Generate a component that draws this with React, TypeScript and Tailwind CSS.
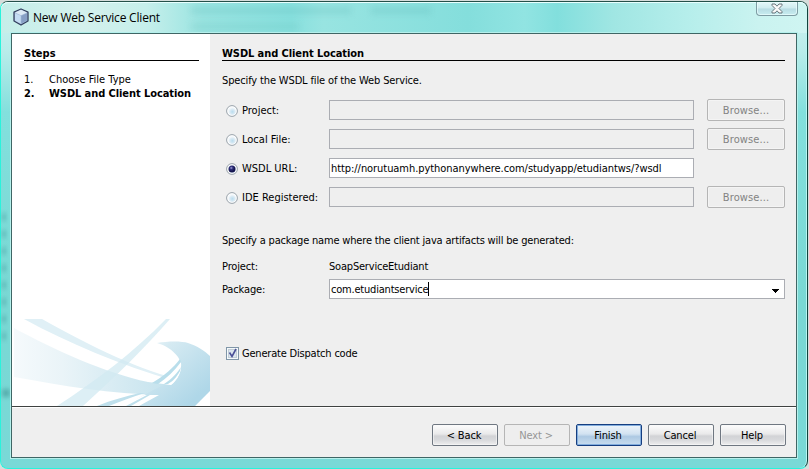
import React from "react";

function Radio({ on = false }: { on?: boolean }) {
  return (
    <svg width="12" height="12" viewBox="0 0 12 12" className="shrink-0">
      <defs>
        <radialGradient id="idle" cx="0.55" cy="0.6">
          <stop offset="0" stopColor="#b9dcee" />
          <stop offset="0.65" stopColor="#dcebf4" />
          <stop offset="1" stopColor="#f4f8fb" />
        </radialGradient>
        <radialGradient id="active" cx="0.4" cy="0.35">
          <stop offset="0" stopColor="#a9a9e0" />
          <stop offset="0.45" stopColor="#30307c" />
          <stop offset="1" stopColor="#15154e" />
        </radialGradient>
      </defs>
      <circle cx="6" cy="6" r="5.4" fill="#fff" stroke="#98a2aa" strokeWidth="1" />
      <circle cx="6" cy="6" r="4" fill="url(#idle)" />
      {on && <circle cx="6" cy="6" r="3.5" fill="url(#active)" />}
    </svg>
  );
}

function Row({ label, on, value, browse = true }: { label: string; on?: boolean; value?: string; browse?: boolean }) {
  return (
    <div className="flex h-[29px] items-start">
      <div className="flex h-[22px] w-[107px] items-center pl-[4px]">
        <div className="pt-[2px]"><Radio on={on} /></div>
        <span className="ml-[4px] pt-px tracking-normal">{label}</span>
      </div>
      <div className={`mt-px flex h-5 w-[365px] items-center border border-[#abadb3] pl-px ${value ? "bg-white" : "bg-[#efefef]"}`}>
        <span className="pt-px tracking-[-0.06px]">{value}</span>
      </div>
      {browse && (
        <button className="ml-[13px] h-[22px] w-[78px] rounded-[2px] border border-[#b5b5b5] bg-[#eeeeee] pt-px tracking-[0.1px] text-[#838383] shadow-[inset_0_0_0_1px_#f4f4f4]">
          Browse...
        </button>
      )}
    </div>
  );
}

const base = "h-[22px] w-[66px] rounded-[2px] border pt-px pr-[2px]";
const normal = `${base} border-[#6f7781] bg-[linear-gradient(#fdfdfd_0%,#e9e9ea_45%,#d2d3d6_55%,#d8d9dc_75%,#efefef_100%)] shadow-[inset_0_0_0_1px_#f8f8f899]`;

export default function App() {
  return (
    <div className="h-[469px] w-[809px] overflow-hidden bg-[#d6dedc] font-['DejaVu_Sans_Condensed','DejaVu_Sans',sans-serif] text-[11px] leading-[14px] tracking-[-0.14px] text-black [font-stretch:condensed]">
      <div className="relative flex h-[468px] w-[808px] translate-y-px flex-col rounded-[8px] border-t border-r border-b border-l border-t-[#245049] border-r-[#12443e] border-b-[#29f3dc] border-l-[#29f3dc] bg-[linear-gradient(#d0f2ef_0px,#b8ecea_50px,#82e0dd_110px,#79d8d4_300px,#79d9d7_468px)] shadow-[inset_0_1px_0_#e8ffff,inset_-1px_0_0_#b8f5f2]">
        <div className="absolute top-[208px] left-0 h-[134px] w-[6px] bg-[repeating-linear-gradient(#4aa3a300_0px,#3f979850_7px,#4aa3a300_14px,#4aa3a300_17px)] blur-[1px]" />
        <div className="absolute top-[387px] left-[1px] h-[8px] w-[8px] bg-[#3d8f8f90] blur-[2px]" />
        <div className="relative flex h-[31px] items-start overflow-hidden rounded-t-[7px] bg-[linear-gradient(90deg,#c5eee9_0%,#d4f1ed_10%,#c6efeb_18%,#9ae4e1_25%,#88e0de_36%,#98e4e1_40%,#84dedc_58%,#91e4e2_65%,#82dfdd_69%,#a0e6e3_76%,#b5eeeb_85%,#caf3f0_94%,#cff5f2_100%)] shadow-[inset_0_1px_0_#e8ffff]">
          <div className="absolute top-[5px] left-[190px] h-[7px] w-[160px] bg-[#58b3b138] blur-[3px]" />
          <div className="absolute top-[5px] left-[370px] h-[7px] w-[60px] bg-[#58b3b138] blur-[3px]" />
          <div className="absolute top-[21px] left-[190px] h-[7px] w-[108px] bg-[#58b3b130] blur-[3px]" />
          <svg width="16" height="18" viewBox="0 0 16 18" className="mt-[6px] ml-[12px]">
            <path d="M8 1 15 4.2V13L8 17 1 13V4.2Z" fill="#a5bdd9" stroke="#354160" strokeWidth="1.3" strokeLinejoin="round" />
            <path d="M8 1.8 14 4.5 8 7.2 2 4.5Z" fill="#dce9f5" />
            <path d="M2 5.2 7.7 7.8V15.6L2 12.5Z" fill="#c4dcf3" />
            <path d="M8.3 7.8 14 5.2V12.5L8.3 15.6Z" fill="#879fc5" />
          </svg>
          <span className="mt-[8px] ml-[4px] font-['Open_Sans',sans-serif] text-[12px] leading-[16px] tracking-[-0.2px] [font-stretch:normal]">New Web Service Client</span>
          <div className="mr-[9px] ml-auto flex h-[14px] w-[42px] items-center justify-center rounded-b-[4px] border border-t-0 border-[#7e9ca3] bg-[linear-gradient(#e4f8f9_0%,#cfecef_48%,#b7dce3_52%,#c8edf0_100%)] shadow-[inset_0_0_0_1px_#ecffffb0]">
            <svg width="12" height="11" viewBox="0 0 12 11">
              <path d="M1 1H4L6 3.2 8 1H11V2.4L8 5.5 11 8.6V10H8L6 7.8 4 10H1V8.6L4 5.5 1 2.4Z" fill="#fafafa" stroke="#68767c" />
            </svg>
          </div>
        </div>

        <main className="relative ml-[10px] flex h-[425px] w-[786px] flex-col border border-[#3f6665] bg-[#efefef] shadow-[0_0_0_1px_#b5f0ec]">
          <div className="flex h-[373px] shrink-0 border-b border-[#3f4241]">
            <aside className="flex w-[198px] flex-col bg-white">
              <div className="mt-[12px] ml-[12px] h-[15px] w-[175px] border-b border-black font-bold">
                <span className="block pt-px tracking-normal">Steps</span>
              </div>
              <ol className="mt-[12px] ml-[12px]">
                <li className="flex h-[14px]"><span className="w-[25px]">1.</span><span className="tracking-normal">Choose File Type</span></li>
                <li className="flex h-[14px] font-bold"><span className="w-[25px]">2.</span><span className="tracking-[-0.08px]">WSDL and Client Location</span></li>
              </ol>
              <svg width="198" height="87" viewBox="12 319 198 87" className="mt-auto">
                <defs>
                  <linearGradient id="sweep" x1="0" x2="1">
                    <stop offset="0" stopColor="#f5fafc" />
                    <stop offset="0.3" stopColor="#eaf4f8" />
                    <stop offset="1" stopColor="#c3e2ed" />
                  </linearGradient>
                  <linearGradient id="bend" x1="0" y1="0" x2="0.9" y2="0.8">
                    <stop offset="0" stopColor="#fff" />
                    <stop offset="0.35" stopColor="#d5eaf2" />
                    <stop offset="1" stopColor="#afd7e8" />
                  </linearGradient>
                </defs>
                <path d="M14 328C55 350 105 373 148 382L174 385 162 395C110 394 65 386 14 377Z" fill="url(#sweep)" />
                <path d="M24 319H42C82 341 130 367 178 379L175 381C118 364 70 344 24 319Z" fill="#e0f0f6" />
                <path d="M166 319H170C145 348 116 376 83 406H57C97 380 134 352 166 319Z" fill="#d2e9f1" fillOpacity="0.75" />
                <path d="M157 343C168 341 182 341 188 343 197 346 205 351 210 356V391L195 406H125C139 398 150 391 164 385H171C181 376 184 365 178 357 173 350 165 345 157 343Z" fill="url(#bend)" />
                <path d="M123 406 144 395H159L139 406Z" fill="#fff" />
                <path d="M97 406C112 400 126 396 140 393H145C132 397 121 401 109 406Z" fill="#bfe0ec" />
                <path d="M126 406 147 395H150L131 406Z" fill="#bfe0ec" />
                <path d="M158 383C169 376 177 367 181 362 182 371 178 380 171 385Z" fill="#fff" />
                <path d="M152 383C164 376 174 367 180 359L181 362C174 371 167 378 158 384Z M164 384C172 379 178 372 181 367L180 371C176 378 173 381 168 384Z" fill="#b9deeb" />
              </svg>
            </aside>
            <section className="flex w-[586px] flex-col pl-[12px]">
              <div className="mt-[12px] h-[15px] w-[563px] border-b border-black font-bold"><span className="block pt-px tracking-[-0.08px]">WSDL and Client Location</span></div>
              <p className="mt-[13px] h-[14px]">Specify the WSDL file of the Web Service.</p>
              <div className="mt-[11px]">
                <Row label="Project:" />
                <Row label="Local File:" />
                <Row label="WSDL URL:" on value="http://norutuamh.pythonanywhere.com/studyapp/etudiantws/?wsdl" browse={false} />
                <Row label="IDE Registered:" />
              </div>
              <p className="mt-[19px] h-[14px] tracking-[-0.18px]">Specify a package name where the client java artifacts will be generated:</p>
              <div className="mt-[12px] flex h-[14px]"><span className="w-[107px]">Project:</span><span className="tracking-[-0.2px]">SoapServiceEtudiant</span></div>
              <div className="mt-[5px] flex h-5 items-center">
                <span className="w-[107px] pt-px">Package:</span>
                <div className="flex h-5 w-[456px] items-center border border-[#abadb3] bg-white pl-px">
                  <span className="pt-px tracking-[-0.2px]">com.etudiantservice</span>
                  <span className="h-[14px] w-px bg-black" />
                  <svg width="7" height="4" viewBox="0 0 7 4" shapeRendering="crispEdges" className="mt-[3px] mr-[5px] ml-auto"><path d="M0 0H7V1H6V2H5V3H4V4H3V3H2V2H1V1H0Z" /></svg>
                </div>
              </div>
              <div className="mt-[47px] ml-[4px] flex h-[14px] items-center">
                <svg width="13" height="13" viewBox="0 0 13 13" className="mt-px">
                  <rect x="0.5" y="0.5" width="12" height="12" fill="#f5f9fb" stroke="#8096a8" />
                  <rect x="2.5" y="2.5" width="8" height="8" fill="#dbe6ee" stroke="#c3ced7" />
                  <path d="M3.5 5.5 6 9.5 10 2" fill="none" stroke="#4b5097" strokeWidth="1.6" />
                </svg>
                <span className="ml-[3px] pt-px tracking-[-0.2px]">Generate Dispatch code</span>
              </div>
            </section>
          </div>
          <footer className="flex flex-1 justify-end gap-[6px] border-t border-white pt-[16px] pr-[10px]">
            <button className={normal}>&lt; Back</button>
            <button className={`${base} border-[#b5b5b5] bg-[#eeeeee] text-[#969696]`}>Next &gt;</button>
            <button className={`${base} border-[#163e80] bg-[linear-gradient(#eef5fb_0%,#d2e2f1_45%,#adc9e3_58%,#c9ddef_100%)] shadow-[inset_0_0_0_1px_#82addd]`}>Finish</button>
            <button className={normal}>Cancel</button>
            <button className={normal}>Help</button>
          </footer>
        </main>
      </div>
    </div>
  );
}
